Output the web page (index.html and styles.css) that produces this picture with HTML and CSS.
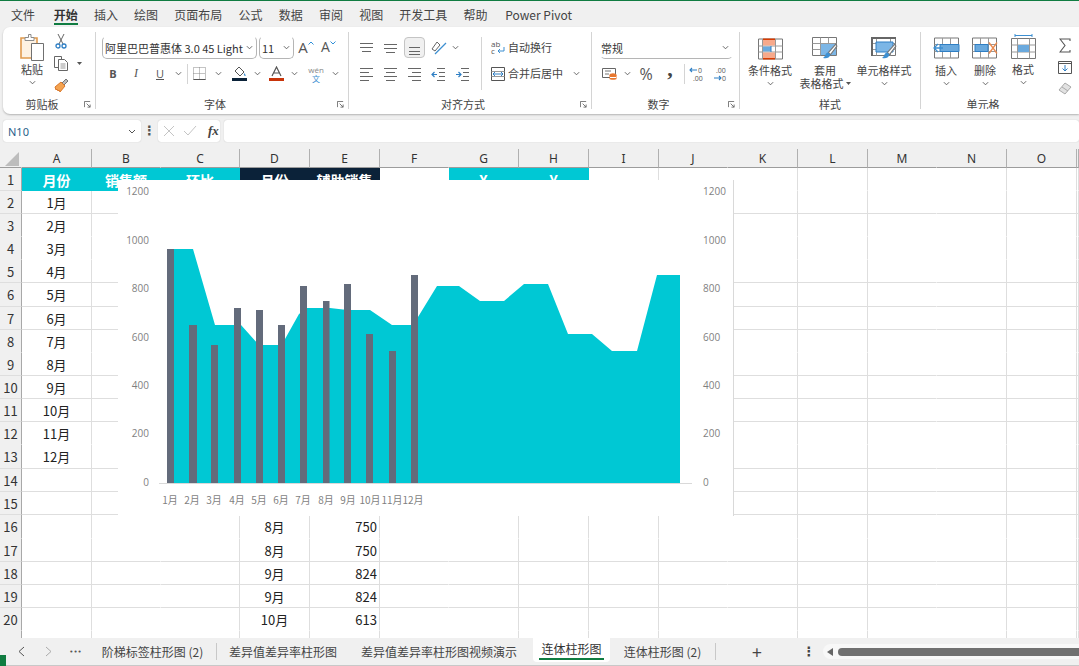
FILE: index.html
```html
<!DOCTYPE html>
<html lang="zh-CN">
<head>
<meta charset="utf-8">
<title>连体柱形图</title>
<link rel="stylesheet" href="styles.css">
</head>
<body>
<svg class="defs" width="0" height="0" aria-hidden="true">
  <symbol id="chev" viewBox="0 0 8 5"><path d="M1 1l3 3 3-3" fill="none" stroke="#555" stroke-width="1"/></symbol>
  <symbol id="launch" viewBox="0 0 8 8"><path d="M.5 7V.5H7M3 3l4 4M7 4v3H4" fill="none" stroke="#666" stroke-width="1"/></symbol>
  <symbol id="brush" viewBox="0 0 14 16"><path d="M12 1L5 9l2 2 6-8z" fill="#fff" stroke="#777"/><path d="M5 9c-2 0-3 2-3 3l-2 2c3 1 6 0 7-3z" fill="#3d8fd1"/></symbol>
</svg>
<div class="app">
  <nav class="menu">
    <span>文件</span><span class="on">开始</span><span>插入</span><span>绘图</span><span>页面布局</span><span>公式</span><span>数据</span><span>审阅</span><span>视图</span><span>开发工具</span><span>帮助</span><span class="pp">Power Pivot</span>
  </nav>

  <section class="ribbon">
    <div class="group g1">
      <div class="body">
        <div class="big w32">
          <svg class="paste" width="25" height="28" viewBox="0 0 25 28"><path d="M1 5h16v20H1z" fill="#fdf1e2" stroke="#e09a4e" stroke-width="1.6"/><path d="M5 4.500h3.500V1.500h2.500v3h3v3H5z" fill="#fff" stroke="#8c8c8c"/><path d="M11.500 10.500h12v17h-12z" fill="#fff" stroke="#707070"/></svg>
          <span class="t">粘贴</span>
          <svg class="chev" width="7" height="5"><use href="#chev"/></svg>
        </div>
        <div class="stack">
          <div class="s1 w26"><svg width="12" height="15" viewBox="0 0 12 15"><path d="M3 0l5 10M9 0L4 10" fill="none" stroke="#666"/><circle cx="3" cy="12" r="2" fill="none" stroke="#2f7fc4" stroke-width="1.300"/><circle cx="9" cy="12" r="2" fill="none" stroke="#2f7fc4" stroke-width="1.300"/></svg></div>
          <div class="s2"><div class="cell w26"><svg width="14" height="15" viewBox="0 0 14 15"><path d="M.5.500h7v11h-7z" fill="#fff" stroke="#666"/><path d="M4.500 3.500h6l3 3v8h-9z" fill="#fff" stroke="#666"/><path d="M6.500 8h5M6.500 10h5M6.500 12h5" stroke="#999"/></svg></div><div class="cell w10"><svg class="tri" width="5" height="3" viewBox="0 0 5 3"><path d="M0 0h5L2.500 3z" fill="#555"/></svg></div></div>
          <div class="s1 w26"><svg width="15" height="14" viewBox="0 0 15 14"><path d="M8 5l3-3 1-1 2 2-1 1-3 3z" fill="#bbb" stroke="#777"/><path d="M1 9l6-5 4 4-5 6-1-2-1 1-1-2-1 1z" fill="#f4a350" stroke="#d9772a"/></svg></div>
        </div>
      </div>
      <div class="lab"><span>剪贴板</span><svg class="launch" width="7" height="7"><use href="#launch"/></svg></div>
    </div>

    <div class="group g2">
      <div class="body col">
        <div class="row">
          <div class="select fontname"><span>阿里巴巴普惠体 3.0 45 Light</span><svg width="7" height="5"><use href="#chev"/></svg></div>
          <div class="select fontsize"><span>11</span><svg width="7" height="5"><use href="#chev"/></svg></div>
          <div class="cell w22 grow"><span class="aa">A</span><svg width="6" height="4" viewBox="0 0 6 4"><path d="M.5 3.500L3 1l2.500 2.500" fill="none" stroke="#2f8fd8"/></svg></div>
          <div class="cell w23 grow"><span class="aa sm">A</span><svg width="6" height="4" viewBox="0 0 6 4"><path d="M.5.500L3 3 5.500.500" fill="none" stroke="#2f8fd8"/></svg></div>
        </div>
        <div class="row r2">
          <div class="cell w22 fb">B</div>
          <div class="cell w24 fi">I</div>
          <div class="cell w24 fu">U</div>
          <div class="cell w12"><svg width="7" height="5"><use href="#chev"/></svg></div>
          <i class="vsep sm3"></i>
          <div class="cell w16"><svg width="13" height="13" viewBox="0 0 13 13"><path d="M.5.500h12v12H.500zM6.500.500v12M.5 6.500h12" fill="none" stroke="#888" stroke-dasharray="1 1"/><path d="M.5 12.500h12" stroke="#555"/></svg></div>
          <div class="cell w22"><svg width="7" height="5"><use href="#chev"/></svg></div>
          <div class="cell w20"><svg width="15" height="15" viewBox="0 0 15 15"><path d="M7 1l5 5-4 4-5-5z" fill="#fff" stroke="#555"/><path d="M12 7c1 1 2 2 1.500 3-1 .5-2-1-1.500-3z" fill="#3d8fd1"/><path d="M0 12h15v3H0z" fill="#0b2239"/></svg></div>
          <div class="cell w16"><svg width="7" height="5"><use href="#chev"/></svg></div>
          <div class="cell w22"><svg width="15" height="15" viewBox="0 0 15 15"><path d="M3 10L7.500 1 12 10M4.500 7h6" fill="none" stroke="#555" stroke-width="1.200"/><path d="M0 12h15v3H0z" fill="#c8340a"/></svg></div>
          <div class="cell w14"><svg width="7" height="5"><use href="#chev"/></svg></div>
          <div class="cell w30 wen"><small>wén</small><b>文</b></div>
          <div class="cell w8"><svg width="7" height="5"><use href="#chev"/></svg></div>
        </div>
      </div>
      <div class="lab"><span>字体</span><svg class="launch" width="7" height="7"><use href="#launch"/></svg></div>
    </div>

    <div class="group g3">
      <div class="body">
        <div class="col left">
          <div class="row">
            <div class="cell w24"><svg width="14" height="14" viewBox="0 0 14 14"><path d="M1 2.500h13M1 6.500h13M3 10.500h9" stroke="#666"/></svg></div>
            <div class="cell w24"><svg width="14" height="14" viewBox="0 0 14 14"><path d="M1 4.500h13M1 8.500h13M3 12.500h9" stroke="#666" transform="translate(0 -1)"/></svg></div>
            <div class="cell w24"><span class="pressed"><svg width="14" height="14" viewBox="0 0 14 14"><path d="M2 6.500h11M2 10.500h11M2 13.500h11" stroke="#666"/></svg></span></div>
            <div class="cell w26"><svg width="16" height="16" viewBox="0 0 16 16"><path d="M1 9L6 2l3 3-5 6z" fill="none" stroke="#666"/><path d="M4 14L15 3" stroke="#3d8fd1" stroke-width="1.200"/></svg></div>
            <div class="cell w6"><svg width="7" height="5"><use href="#chev"/></svg></div>
          </div>
          <div class="row r2">
            <div class="cell w24"><svg width="14" height="14" viewBox="0 0 14 14"><path d="M1 1.500h13M1 5.500h9M1 9.500h13M1 13.500h9" stroke="#666"/></svg></div>
            <div class="cell w24"><svg width="14" height="14" viewBox="0 0 14 14"><path d="M1 1.500h13M3 5.500h9M1 9.500h13M3 13.500h9" stroke="#666"/></svg></div>
            <div class="cell w24"><svg width="14" height="14" viewBox="0 0 14 14"><path d="M1 1.500h13M5 5.500h9M1 9.500h13M5 13.500h9" stroke="#666"/></svg></div>
            <div class="cell w24"><svg width="14" height="14" viewBox="0 0 14 14"><path d="M6 1.500h8M8 5.500h6M8 9.500h6M6 13.500h8" stroke="#666"/><path d="M6 7.500H1M3.500 5L1 7.500 3.500 10" fill="none" stroke="#2f7fc4" stroke-width="1.200"/></svg></div>
            <div class="cell w24"><svg width="14" height="14" viewBox="0 0 14 14"><path d="M6 1.500h8M8 5.500h6M8 9.500h6M6 13.500h8" stroke="#666"/><path d="M1 7.500h5M3.500 5L6 7.500 3.500 10" fill="none" stroke="#2f7fc4" stroke-width="1.200"/></svg></div>
          </div>
        </div>
        <i class="vsep tall"></i>
        <div class="col right">
          <div class="row">
            <div class="cell w20"><svg width="14" height="16" viewBox="0 0 14 16"><text class="ab" x="0" y="7">ab</text><text class="ab" x="0" y="14">c</text><path d="M13 7v4H7M9 9l-2 2 2 2" fill="none" stroke="#3d8fd1"/></svg></div>
            <span class="t">自动换行</span>
          </div>
          <div class="row r2">
            <div class="cell w20"><svg width="14" height="14" viewBox="0 0 14 14"><path d="M.5.500h13v13H.500z" fill="#fff" stroke="#555"/><path d="M.5 4.500h13M.5 9.500h13" stroke="#999"/><path d="M2 7h10M4 5L2 7l2 2M10 5l2 2-2 2" fill="none" stroke="#2f7fc4"/></svg></div>
            <span class="t merge">合并后居中</span>
            <div class="cell w26"><svg width="7" height="5"><use href="#chev"/></svg></div>
          </div>
        </div>
      </div>
      <div class="lab"><span>对齐方式</span><svg class="launch" width="7" height="7"><use href="#launch"/></svg></div>
    </div>

    <div class="group g4">
      <div class="body col">
        <div class="row"><div class="select numfmt"><span>常规</span><svg width="7" height="5"><use href="#chev"/></svg></div></div>
        <div class="row r2">
          <div class="cell w18"><svg width="15" height="14" viewBox="0 0 15 14"><path d="M.5 1.500h13v9H.500z" fill="#fff" stroke="#666"/><path d="M3 4h6M3 7h4" stroke="#777"/><ellipse cx="11" cy="8" rx="3.500" ry="1.800" fill="#e8772e"/><path d="M7.500 8v4c0 1 7 1 7 0V8" fill="#e8772e"/><path d="M8 10.500h6" stroke="#fff"/></svg></div>
          <div class="cell w18"><svg width="7" height="5"><use href="#chev"/></svg></div>
          <div class="cell w20 pct">%</div>
          <div class="cell w28 comma">,</div>
          <i class="vsep sm0"></i>
          <div class="cell w22"><svg width="15" height="16" viewBox="0 0 15 16"><text class="dec" x="9" y="7">0</text><text class="dec" x="4" y="15">.00</text><path d="M8 4H1M3 2L1 4l2 2" fill="none" stroke="#2f7fc4" stroke-width="1.100"/></svg></div>
          <div class="cell w26"><svg width="15" height="16" viewBox="0 0 15 16"><text class="dec" x="3" y="7">.00</text><text class="dec" x="9" y="15">0</text><path d="M1 12h7M6 10l2 2-2 2" fill="none" stroke="#2f7fc4" stroke-width="1.100"/></svg></div>
        </div>
      </div>
      <div class="lab"><span>数字</span><svg class="launch" width="7" height="7"><use href="#launch"/></svg></div>
    </div>

    <div class="group g5">
      <div class="body">
        <div class="big w60">
          <svg width="25" height="21" viewBox="0 0 25 21"><path d="M.5.500h24v20H.500z" fill="#fff" stroke="#777"/><path d="M.5 7.500h24M.5 13.500h24M4.500.5v20M17.500.5v20" stroke="#999"/><path d="M5 1h12v6H5zM5 14h12v6H5z" fill="#f7a98b"/><path d="M5 8h8v5H5z" fill="#6aa9dd"/><path d="M5 .8h12M5 20.200h12" stroke="#d83b01" stroke-width="1.500"/><path d="M13 7.500v6" stroke="#2f7fc4"/></svg>
          <span class="t">条件格式</span>
          <svg class="chev" width="7" height="5"><use href="#chev"/></svg>
        </div>
        <div class="big w50">
          <svg width="27" height="24" viewBox="0 0 27 24"><path d="M.5.500h24v18H.500z" fill="#fff" stroke="#777"/><path d="M.5 6.500h24M.5 12.500h24M8.500.5v18M16.500.5v18" stroke="#999"/><path d="M9 7h15v11H9z" fill="#7cb6e6"/><use href="#brush" x="11" y="6" width="15" height="17"/></svg>
          <span class="t">套用</span>
          <span class="t two">表格格式<svg class="tri" width="5" height="3" viewBox="0 0 5 3"><path d="M0 0h5L2.500 3z" fill="#555"/></svg></span>
        </div>
        <div class="big w68">
          <svg width="27" height="24" viewBox="0 0 27 24"><path d="M.5.500h24v18H.500z" fill="#fff" stroke="#777"/><path d="M.5 6.500h24M.5 12.500h24M5.500.5v18M19.500.5v18" stroke="#999"/><path d="M0 0h25v2H0zM0 0h2v19H0z" fill="#666"/><path d="M5 5h17v10H5z" fill="#7cb6e6" stroke="#2f7fc4"/><use href="#brush" x="11" y="6" width="15" height="17"/></svg>
          <span class="t">单元格样式</span>
          <svg class="chev" width="7" height="5"><use href="#chev"/></svg>
        </div>
      </div>
      <div class="lab plain"><span>样式</span></div>
    </div>

    <div class="group g6">
      <div class="body">
        <div class="big w50">
          <svg width="27" height="21" viewBox="0 0 27 21"><path d="M1.500.500h24v20h-24z" fill="#fff" stroke="#777"/><path d="M1.500 7h24M1.500 14h24M9.500.5v20M17.500.5v20" stroke="#999"/><path d="M7 7h19v7H7z" fill="#6aa9dd" stroke="#2f7fc4"/><path d="M10 10.500H1M5 6.500l-4 4 4 4" fill="none" stroke="#3d8fd1" stroke-width="1.300"/></svg>
          <span class="t">插入</span>
          <svg class="chev" width="7" height="5"><use href="#chev"/></svg>
        </div>
        <div class="big w28">
          <svg width="27" height="21" viewBox="0 0 27 21"><path d="M.5.500h24v20H.500z" fill="#fff" stroke="#777"/><path d="M.5 7h24M.5 14h24M8.500.5v20M16.500.5v20" stroke="#999"/><path d="M3 7h13v7H3z" fill="#6aa9dd" stroke="#2f7fc4"/><path d="M17 5l8 11M25 5l-8 11" stroke="#ea8a4e" stroke-width="1.300"/></svg>
          <span class="t">删除</span>
          <svg class="chev" width="7" height="5"><use href="#chev"/></svg>
        </div>
        <div class="big w48 fmt">
          <svg width="27" height="25" viewBox="0 0 27 25"><path d="M5 1.500h17M5 0v3M22 0v3" stroke="#3d8fd1"/><path d="M1.500 4.500h24v20h-24z" fill="#fff" stroke="#777"/><path d="M1.500 11h24M1.500 18h24M7.500 4.500v20M19.500 4.500v20" stroke="#999"/><path d="M8 11h11v7H8z" fill="#6aa9dd"/></svg>
          <span class="t">格式</span>
          <svg class="chev" width="7" height="5"><use href="#chev"/></svg>
        </div>
        <div class="stack">
          <div class="s1 w36"><svg width="12" height="15" viewBox="0 0 12 15"><path d="M11 3V1H1l5 6.500L1 14h10v-2" fill="none" stroke="#555" stroke-width="1.100"/></svg></div>
          <div class="s2"><div class="cell w36"><svg width="14" height="13" viewBox="0 0 14 13"><path d="M.5.500h13v12H.500z" fill="#fff" stroke="#555"/><path d="M.5 2.500h13" stroke="#555"/><path d="M7 4v6M4.500 7.500L7 10l2.500-2.500" fill="none" stroke="#2f7fc4"/></svg></div></div>
          <div class="s1 w36"><svg width="14" height="13" viewBox="0 0 14 13"><path d="M1 8l6-7 6 4-6 7z" fill="#e2e2e2" stroke="#aaa"/><path d="M4 5l6 4" stroke="#aaa"/></svg></div>
        </div>
      </div>
      <div class="lab plain last"><span>单元格</span></div>
    </div>
  </section>

  <section class="formula">
    <div class="namebox"><span>N10</span><svg width="8" height="5"><use href="#chev"/></svg></div>
    <div class="dots">⋮</div>
    <div class="fbtns">
      <svg width="12" height="12" viewBox="0 0 12 12"><path d="M1 1l10 10M11 1L1 11" stroke="#c4c4c4"/></svg>
      <svg width="14" height="12" viewBox="0 0 14 12"><path d="M1 6l4 4 8-9" fill="none" stroke="#c4c4c4"/></svg>
      <span class="fx">fx</span>
    </div>
    <div class="fbar"></div>
  </section>

  <section class="sheet">
    <table>
      <colgroup><col class="c22"><col class="c70"><col class="c69"><col class="c79"><col class="c70"><col class="c70"><col class="c69"><col class="c70"><col class="c70"><col class="c70"><col class="c69"><col class="c70"><col class="c70"><col class="c69"><col class="c70"><col class="c70"><col class="c2"></colgroup>
      <tr class="hd"><th class="corner"></th><th>A</th><th>B</th><th>C</th><th>D</th><th>E</th><th>F</th><th>G</th><th>H</th><th>I</th><th>J</th><th>K</th><th>L</th><th>M</th><th>N</th><th>O</th><th></th></tr>
      <tr class="title"><th>1</th><td class="teal">月份</td><td class="teal">销售额</td><td class="teal">环比</td><td class="navy">月份</td><td class="navy">辅助销售</td><td></td><td class="teal">X</td><td class="teal">Y</td><td></td><td></td><td></td><td></td><td></td><td></td><td></td><td></td></tr>
      <tr><th>2<td>1月<td><td><td><td><td><td><td><td><td><td><td><td><td><td><td></tr>
      <tr class="n"><th>3<td>2月<td><td><td><td><td><td><td><td><td><td><td><td><td><td><td></tr>
      <tr class="n"><th>4<td>3月<td><td><td><td><td><td><td><td><td><td><td><td><td><td><td></tr>
      <tr><th>5<td>4月<td><td><td><td><td><td><td><td><td><td><td><td><td><td><td></tr>
      <tr class="tall"><th>6<td>5月<td><td><td><td><td><td><td><td><td><td><td><td><td><td><td></tr>
      <tr><th>7<td>6月<td><td><td><td><td><td><td><td><td><td><td><td><td><td><td></tr>
      <tr class="n"><th>8<td>7月<td><td><td><td><td><td><td><td><td><td><td><td><td><td><td></tr>
      <tr><th>9<td>8月<td><td><td><td><td><td><td><td><td><td><td><td><td><td><td></tr>
      <tr><th>10<td>9月<td><td><td><td><td><td><td><td><td><td><td><td><td><td><td></tr>
      <tr><th>11<td>10月<td><td><td><td><td><td><td><td><td><td><td><td><td><td><td></tr>
      <tr class="n"><th>12<td>11月<td><td><td><td><td><td><td><td><td><td><td><td><td><td><td></tr>
      <tr class="tall"><th>13<td>12月<td><td><td><td><td><td><td><td><td><td><td><td><td><td><td></tr>
      <tr><th>14<td><td><td><td><td><td><td><td><td><td><td><td><td><td><td><td></tr>
      <tr><th>15<td><td><td><td><td><td><td><td><td><td><td><td><td><td><td><td></tr>
      <tr class="n tall"><th>16<td><td><td><td>8月<td class="r">750<td><td><td><td><td><td><td><td><td><td><td></tr>
      <tr><th>17<td><td><td><td>8月<td class="r">750<td><td><td><td><td><td><td><td><td><td><td></tr>
      <tr><th>18<td><td><td><td>9月<td class="r">824<td><td><td><td><td><td><td><td><td><td><td></tr>
      <tr><th>19<td><td><td><td>9月<td class="r">824<td><td><td><td><td><td><td><td><td><td><td></tr>
      <tr class="n"><th>20<td><td><td><td>10月<td class="r">613<td><td><td><td><td><td><td><td><td><td><td></tr>
      <tr><th>21<td><td><td><td>10月<td class="r">613<td><td><td><td><td><td><td><td><td><td><td></tr>
    </table>

    <div class="chart">
      <svg width="615" height="336" viewBox="118 180 615 336">
        <polygon class="area" points="167,483 167,249 193,249 215,325 241,325 259,345 285,345 285,339 299,314 307,308 330,308 343,309.500 351,310 370,310 392,325 418,325 418,317 437,286 459,286 480,301 504,301 524,284 548,284 568,334 592,334 612,351 637,351 657,275 680,275 680,483"/>
        <g class="bars">
          <rect x="167" y="249" width="7" height="234"/>
          <rect x="189" y="325" width="8" height="158"/>
          <rect x="211" y="345" width="7" height="138"/>
          <rect x="234" y="308" width="7" height="175"/>
          <rect x="256" y="310" width="7" height="173"/>
          <rect x="278" y="325" width="7" height="158"/>
          <rect x="300" y="286" width="7" height="197"/>
          <rect x="323" y="301" width="6.500" height="182"/>
          <rect x="344" y="284" width="7" height="199"/>
          <rect x="366" y="334" width="7" height="149"/>
          <rect x="389" y="351" width="7" height="132"/>
          <rect x="411" y="275" width="7" height="208"/>
        </g>
        <path class="base" d="M159 483.500H692"/>
        <g class="yl">
          <text x="149" y="195">1200</text><text x="149" y="244">1000</text><text x="149" y="292">800</text><text x="149" y="341">600</text><text x="149" y="389">400</text><text x="149" y="437">200</text><text x="149" y="486">0</text>
        </g>
        <g class="yr">
          <text x="703" y="195">1200</text><text x="703" y="244">1000</text><text x="703" y="292">800</text><text x="703" y="341">600</text><text x="703" y="389">400</text><text x="703" y="437">200</text><text x="703" y="486">0</text>
        </g>
        <g class="xl">
          <text x="170" y="504">1月</text><text x="192" y="504">2月</text><text x="214" y="504">3月</text><text x="237" y="504">4月</text><text x="259" y="504">5月</text><text x="281" y="504">6月</text><text x="303" y="504">7月</text><text x="326" y="504">8月</text><text x="348" y="504">9月</text><text x="370" y="504">10月</text><text x="392" y="504">11月</text><text x="413" y="504">12月</text>
        </g>
      </svg>
    </div>
  </section>

  <footer class="tabbar">
    <i class="corner-green"></i>
    <div class="nav"><svg width="7" height="11" viewBox="0 0 7 11"><path d="M6 1L1 5.500 6 10" fill="none" stroke="#555"/></svg></div>
    <div class="nav"><svg width="7" height="11" viewBox="0 0 7 11"><path d="M1 1l5 4.500L1 10" fill="none" stroke="#aaa"/></svg></div>
    <div class="nav more">•••</div>
    <div class="tab t1 sep">阶梯标签柱形图 (2)</div>
    <div class="tab t2">差异值差异率柱形图</div>
    <div class="tab t3">差异值差异率柱形图视频演示</div>
    <div class="tab active"><span>连体柱形图</span></div>
    <div class="tab t5 sep">连体柱形图 (2)</div>
    <div class="add">+</div>
    <div class="vdots">⋮</div>
    <div class="hscroll"><svg width="6" height="8" viewBox="0 0 6 8"><path d="M6 0v8L0 4z" fill="#666"/></svg><span class="thumb"></span></div>
  </footer>
</div>
</body>
</html>
```

FILE: styles.css
```css
* { box-sizing: border-box; }
html, body { margin: 0; padding: 0; }
body {
  width: 1079px;
  height: 666px;
  overflow: hidden;
  background: #f0f0f0;
  font-family: "Noto Sans CJK SC", "Noto Sans", sans-serif;
  color: #333;
}
.defs { position: absolute; }
.app { display: flex; flex-direction: column; height: 666px; overflow: hidden; }
svg { display: block; flex: none; }

/* menu */
.menu {
  height: 27px;
  border-top: 1px solid #107c41;
  display: flex;
  align-items: flex-start;
  gap: 16.200px;
  padding: 5px 0 0 11px;
  font-size: 12px;
  color: #444;
}
.menu span { line-height: 17px; border-bottom: 2px solid transparent; }
.menu .on { font-weight: 700; color: #333; border-bottom-color: #107c41; margin-left: 2.500px; }
.menu .pp { margin-left: 1.500px; }

/* ribbon */
.ribbon {
  height: 87px;
  margin-left: 3px;
  padding: 5px 0;
  display: flex;
  background: #fff;
  border-radius: 7px 0 0 7px;
  box-shadow: 0 1px 2px rgba(0, 0, 0, .25);
  font-size: 11px;
  color: #444;
}
.group { display: flex; flex-direction: column; height: 77px; border-right: 1px solid #d4d4d4; flex: none; }
.g1 { width: 93px; }
.g2 { width: 253px; }
.g3 { width: 243px; }
.g4 { width: 148px; }
.g5 { width: 181px; }
.g6 { width: 158px; border-right: 0; overflow: hidden; }
.body { height: 65px; display: flex; flex: none; }
.g1 .body { padding-left: 13px; }
.g2 .body { padding: 4px 0 0 6px; }
.g3 .body { padding: 4px 0 0 5px; }
.g4 .body { padding: 4px 0 0 8px; }
.g5 .body, .g6 .body { padding-top: 5px; }
.col { display: flex; flex-direction: column; }
.left { width: 127px; }
.right { padding-left: 6px; }
.row { display: flex; align-items: center; height: 23px; }
.r2 { margin-top: 3px; }
.cell { display: flex; align-items: center; justify-content: center; height: 23px; flex: none; }
.w6 { width: 6px; } .w8 { width: 8px; } .w10 { width: 10px; } .w12 { width: 12px; } .w14 { width: 14px; }
.w16 { width: 16px; } .w18 { width: 18px; } .w20 { width: 20px; } .w22 { width: 22px; } .w23 { width: 23px; }
.w24 { width: 24px; } .w26 { width: 26px; } .w28 { width: 28px; } .w30 { width: 30px; } .w32 { width: 32px; }
.w36 { width: 36px; } .w48 { width: 48px; } .w50 { width: 50px; } .w60 { width: 60px; } .w68 { width: 68px; }
.t { display: block; line-height: 13px; white-space: nowrap; }
.merge { width: 55px; }

.big { display: flex; flex-direction: column; align-items: center; flex: none; }
.big .t { margin-top: 5px; }
.big .two { margin-top: 0; display: flex; align-items: center; gap: 2px; }
.big .chev { margin-top: 4px; }
.g1 .big { padding-top: 1px; }
.g1 .big .t { margin-top: 2px; }
.g5 .big > svg:first-child, .g6 .big > svg:first-child { height: 22px; }
.g5 .big > svg:first-child { height: 24px; margin-bottom: -2px; }
.g6 .fmt { margin-top: -3px; }
.g6 .fmt .t { margin-top: 4px; }
.g6 .fmt > svg:first-child { height: 25px; }

.stack { display: flex; flex-direction: column; }
.s1 { height: 18px; display: flex; align-items: center; justify-content: center; }
.s2 { height: 26px; display: flex; align-items: center; }
.s2 .cell { height: 26px; }

.select {
  display: flex; align-items: center; justify-content: space-between;
  height: 23px; padding: 0 3px 0 2px;
  border: 1px solid #b5b5b5; border-top-color: transparent; border-radius: 5px;
  flex: none; color: #333;
}
.select span { white-space: nowrap; }
.fontname { width: 155px; margin-right: 2px; }
.fontsize { width: 35px; padding-left: 2px; margin-right: 1px; }
.numfmt { width: 133px; border-left-color: transparent; border-right-color: transparent; padding-left: 0; }
.aa { font: 15px "Open Sans", sans-serif; color: #555; }
.aa.sm { font-size: 14px; }
.grow { align-items: flex-start; padding-top: 1px; }
.grow svg { margin-top: 4px; }
.fb { font: 700 11px "Open Sans", sans-serif; color: #555; }
.fi { font: italic 12px "Liberation Serif", serif; color: #555; }
.fu { font: 11px "Open Sans", sans-serif; color: #555; text-decoration: underline; }
.wen { flex-direction: column; line-height: 8px; }
.wen small { font: 8px "Open Sans", sans-serif; color: #888; }
.wen b { font-weight: 400; font-size: 8px; color: #3d8fd1; }
.pct { font: 16px "Open Sans", sans-serif; color: #555; }
.comma { font: 700 22px "Liberation Serif", serif; color: #444; padding-bottom: 10px; }
.dec { font: 7px "Open Sans", sans-serif; fill: #555; }
.ab { font: 8px "Open Sans", sans-serif; fill: #555; }
.pressed {
  display: flex; align-items: center; justify-content: center;
  width: 21px; height: 21px; background: #f0f0f0; border: 1px solid #c4c4c4; border-radius: 4px;
}
.vsep { display: block; width: 1px; background: #d4d4d4; flex: none; }
.sm3 { height: 20px; margin: 0 3px; }
.sm0 { height: 20px; }
.vsep.tall { height: 53px; margin-top: 1px; }

.lab { display: flex; align-items: center; height: 14px; line-height: 14px; }
.lab span { flex: 1; text-align: center; }
.lab .launch { margin: 0 4px 0 3px; }
.last { padding-right: 34px; }

/* formula bar */
.formula { height: 22px; margin-top: 6px; padding-left: 3px; display: flex; align-items: stretch; }
.namebox, .fbtns, .fbar { background: #fff; border-radius: 3px; box-shadow: 0 0 1px rgba(0, 0, 0, .25); }
.namebox {
  width: 138px; display: flex; align-items: center; justify-content: space-between;
  padding: 0 5px 0 5px; font: 11px "Noto Sans", sans-serif; color: #2a5f8a;
}
.dots { width: 17px; text-align: center; font: 700 13px/22px "DejaVu Sans", sans-serif; color: #555; }
.fbtns { width: 62px; display: flex; align-items: center; gap: 8px; padding-left: 5px; }
.fx { font: italic 700 13px "Liberation Serif", serif; color: #444; margin-left: 3px; }
.fbar { flex: 1; margin-left: 4px; }

/* sheet */
.sheet { position: relative; height: 489px; margin-top: 7px; overflow: hidden; background: #fff; flex: none; }
table { table-layout: fixed; width: 1079px; border-collapse: separate; border-spacing: 0; font-size: 13px; color: #222; }
.c22 { width: 22px; } .c70 { width: 70px; } .c69 { width: 69px; } .c79 { width: 79px; } .c2 { width: 2px; }
tr { height: 23px; }
tr.tall { height: 24px; }
th, td {
  padding: 1px 0 0; height: inherit; font-weight: 400; line-height: 16px; text-align: center; overflow: hidden; white-space: nowrap;
  border-right: 1px solid #dedede; border-bottom: 1px solid #dedede;
}
td:nth-child(3), td:nth-child(7), td:nth-child(11), td:nth-child(14),
.hd th:nth-child(3), .hd th:nth-child(7), .hd th:nth-child(11), .hd th:nth-child(14) { border-right-color: transparent; }
tr.n td, tr.n th { border-bottom-color: transparent; }
tr > th:first-child { background: #f0f0f0; border-right: 1px solid #a8a8a8; color: #333; }
.hd { height: 19px; }
.hd th { padding: 0; background: #f0f0f0; border-right-color: #b0b0b0; border-bottom-color: #9c9c9c; font: 12px "Noto Sans", sans-serif; color: #333; }
.hd th.corner { position: relative; border-right-color: #f0f0f0; }
.hd th.corner::after {
  content: ""; position: absolute; right: 2px; bottom: 1px;
  border-style: solid; border-width: 0 0 14px 14px; border-color: transparent transparent #bdbdbd transparent;
}
td.r { text-align: right; padding-right: 2px; }
.title td { font-weight: 700; font-size: 14px; color: #fff; border-bottom-color: transparent; }
.title .teal { background: #00c8d4; border-right-color: transparent; }
.title .navy { background: #0b2239; border-right-color: transparent; }

/* chart overlay */
.chart { position: absolute; left: 118px; top: 31px; width: 616px; height: 336px; background: #fff; border-right: 1px solid #d9d9d9; }
.area { fill: #00c8d4; }
.bars rect { fill: #636b7b; }
.base { stroke: #d9d9d9; fill: none; }
.yl text, .yr text { font: 10px "Open Sans", sans-serif; fill: #7f7f7f; }
.yl text { text-anchor: end; }
.xl text { font: 10px "Noto Sans CJK SC", sans-serif; fill: #7f7f7f; text-anchor: middle; }

/* sheet tabs */
.tabbar {
  position: relative; flex: none; height: 28px; display: flex; align-items: center;
  border-bottom: 1px solid #c8c8c8; font-size: 12px; color: #444; padding-left: 8px;
}
.corner-green { position: absolute; left: 0; bottom: -1px; width: 6px; height: 11px; background: #107c41; }
.nav { width: 27px; display: flex; justify-content: center; align-items: center; flex: none; }
.more { font: 7px "DejaVu Sans", sans-serif; color: #555; }
.tab { flex: none; text-align: center; white-space: nowrap; line-height: 17px; }
.t1 { width: 128px; }
.t2 { width: 132px; }
.t3 { width: 180px; }
.t5 { width: 106px; }
.sep { position: relative; border-right: 1px solid #c8c8c8; height: 17px; }
.active {
  width: 77px; height: 24px; margin-left: 4px; align-self: flex-start; background: #fff;
  border-radius: 0 0 4px 4px; padding-top: 3px; color: #333; display: flex; justify-content: center;
}
.active span { display: block; width: 65px; height: 19px; border-bottom: 2px solid #107c41; line-height: 16px; }
.add { width: 82px; flex: none; text-align: center; font: 18px "Open Sans", sans-serif; color: #444; }
.vdots { width: 22px; flex: none; text-align: center; font: 700 13px "DejaVu Sans", sans-serif; color: #444; }
.hscroll {
  flex: 1; margin-left: 3px; height: 15px; background: #f8f8f8; border-radius: 8px 0 0 8px;
  display: flex; align-items: center; padding-left: 4px;
}
.thumb { flex: 1; height: 8px; margin-left: 5px; background: #707070; border-radius: 4px 0 0 4px; }
```
